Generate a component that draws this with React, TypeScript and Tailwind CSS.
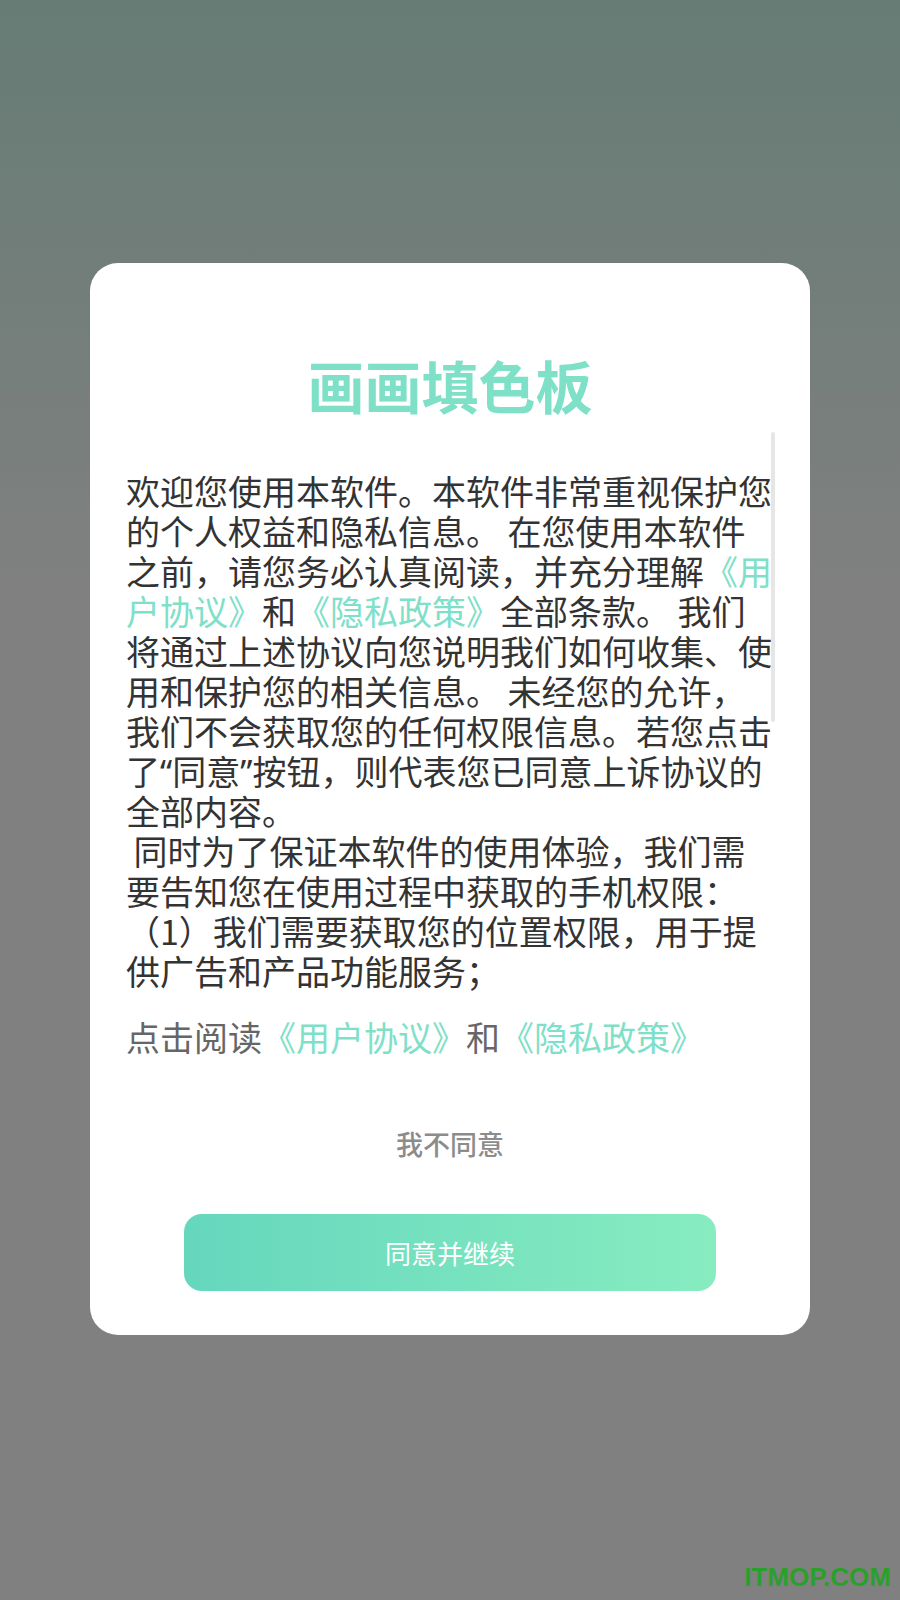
import React from 'react';

const lineCls = "whitespace-pre leading-[40px] h-[40px]";
const link = "text-[#7fe0c8]";
const quote = "font-['Noto_Sans',sans-serif]";

export default function App() {
  return (
    <div className="relative w-full h-[1600px] overflow-hidden bg-[linear-gradient(to_bottom,#667c74_0px,#808080_600px)] font-['Noto_Sans_CJK_SC',sans-serif] pt-[263px]">
      <div className="mx-auto w-[720px] bg-white rounded-[28px] pt-[93px] pb-[44px]">
        <h1 className="text-center text-[57px] leading-[57px] font-bold text-[#7fe0c8]">画画填色板</h1>

        <div className="relative mt-[19px] pt-[39px] px-[36px]">
          <div className="absolute top-0 right-[35px] w-[4px] h-[290px] rounded-full bg-[#e6e6e6]" />
          <div className="text-[34px] text-[#333333]">
            <div className={lineCls}>欢迎您使用本软件。本软件非常重视保护您</div>
            <div className={lineCls}>的个人权益和隐私信息。 在您使用本软件</div>
            <div className={lineCls}>之前，请您务必认真阅读，并充分理解<span className={link}>《用</span></div>
            <div className={lineCls}><span className={link}>户协议》</span>和<span className={link}>《隐私政策》</span>全部条款。 我们</div>
            <div className={lineCls}>将通过上述协议向您说明我们如何收集、使</div>
            <div className={lineCls}>用和保护您的相关信息。 未经您的允许，</div>
            <div className={lineCls}>我们不会获取您的任何权限信息。若您点击</div>
            <div className={lineCls}>了<span className={quote}>“</span>同意<span className={quote}>”</span>按钮，则代表您已同意上诉协议的</div>
            <div className={lineCls}>全部内容。</div>
            <div className={lineCls}> 同时为了保证本软件的使用体验，我们需</div>
            <div className={lineCls}>要告知您在使用过程中获取的手机权限：</div>
            <div className={lineCls}>（1）我们需要获取您的位置权限，用于提</div>
            <div className={lineCls}>供广告和产品功能服务；</div>
          </div>
          <div className="mt-[26px] text-[34px] text-[#666666] whitespace-pre leading-[40px]">
            点击阅读<span className={link}>《用户协议》</span>和<span className={link}>《隐私政策》</span>
          </div>
        </div>

        <div className="mt-[67px] text-center text-[27px] leading-[40px] font-medium text-[#8c8c8c]">我不同意</div>

        <button className="mt-[50px] mx-auto flex items-center justify-center w-[532px] h-[77px] rounded-[18px] bg-[linear-gradient(to_right,#65d7bd,#87ecc0)] text-white text-[26px]">
          同意并继续
        </button>
      </div>

      <div className="absolute top-[1564px] right-[9px] font-['Liberation_Sans',sans-serif] font-bold text-[26px] leading-[26px] text-[#2aa02a]">
        ITMOP.COM
      </div>
    </div>
  );
}
